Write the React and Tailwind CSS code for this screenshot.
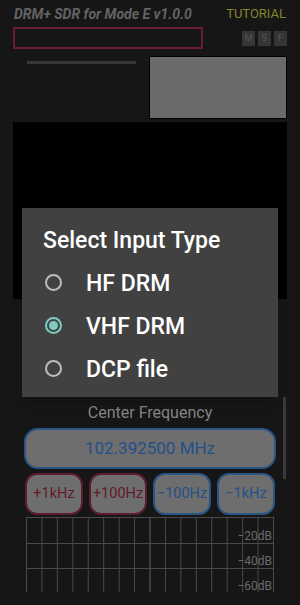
import { useState } from "react";

const inputTypes = [
  { id: "hf", label: "HF DRM" },
  { id: "vhf", label: "VHF DRM" },
  { id: "dcp", label: "DCP file" },
];

const stepButtons = [
  { label: "+1kHz", tone: "red" },
  { label: "+100Hz", tone: "red" },
  { label: "\u2212100Hz", tone: "blue" },
  { label: "\u22121kHz", tone: "blue" },
];

const SpectrumGrid = () => {
  const width = 248;
  const height = 75;
  const cols = 16;
  const step = (width - 1) / cols;

  return (
    <svg width={width} height={height} className="block">
      {Array.from({ length: cols + 1 }).map((_, i) => (
        <line
          key={i}
          x1={0.5 + i * step}
          x2={0.5 + i * step}
          y1={0}
          y2={height}
          stroke="#4a4a4a"
          strokeWidth={i === 8 ? 1.5 : 1}
        />
      ))}
      {[0.5, 26.5, 51.5].map((y) => (
        <line key={y} x1={0} x2={width} y1={y} y2={y} stroke="#4a4a4a" strokeWidth={1} />
      ))}
      {["20", "40", "60"].map((db, i) => (
        <text
          key={db}
          x={246}
          y={23 + i * 25}
          textAnchor="end"
          fontSize="12"
          fontFamily="Roboto, sans-serif"
          fill="#6a6a6a"
        >
          {`\u2212${db}dB`}
        </text>
      ))}
    </svg>
  );
};

const App = () => {
  const [inputType, setInputType] = useState("vhf");

  return (
    <div className="relative h-[605px] w-[300px] overflow-hidden bg-[#161616] font-['Roboto',sans-serif]">
      <header className="flex items-start justify-between px-[14px] pt-[6px]">
        <h1 className="text-[14px] font-bold italic leading-[16px] text-[#636363]">
          DRM+ SDR for Mode E v1.0.0
        </h1>
        <span className="text-[13px] leading-[16px] text-[#85852a]">TUTORIAL</span>
      </header>

      <div className="mt-[5px] flex items-start justify-between px-[13px]">
        <div className="h-[22px] w-[190px] border-2 border-[#6a1b39]" />
        <div className="mt-[4px] flex gap-[3px]">
          {["M", "S", "F"].map((k) => (
            <div
              key={k}
              className="flex h-[15px] w-[13px] items-center justify-center bg-[#353535] text-[9px] text-[#555]"
            >
              {k}
            </div>
          ))}
        </div>
      </div>

      <div className="mt-[7px] flex px-[13px]">
        <div className="flex-1 pl-[14px] pt-[5px]">
          <div className="h-[3px] w-[109px] bg-[#383838]" />
        </div>
        <div className="h-[63px] w-[138px] border border-black bg-[#6b6b6b]" />
      </div>

      <div className="mx-[13px] mt-[3px] h-[177px] bg-black" />

      <p className="mt-[105px] text-center text-[16px] leading-[18px] text-[#858585]">
        Center Frequency
      </p>

      <div className="mx-[24px] mt-[6px] flex h-[41px] items-center justify-center rounded-[14px] border-2 border-[#2b5586] bg-[#6e6e6e] text-[17px] text-[#24508a]">
        102.392500 MHz
      </div>

      <div className="mx-[25px] mt-[4px] flex gap-[6px]">
        {stepButtons.map((b) => (
          <button
            key={b.label}
            type="button"
            className={`flex h-[42px] flex-1 items-center justify-center rounded-[12px] border-2 bg-[#6e6e6e] text-[14.5px] ${
              b.tone === "red"
                ? "border-[#5e1d2c] text-[#65192a]"
                : "border-[#2b5586] text-[#24508a]"
            }`}
          >
            {b.label}
          </button>
        ))}
      </div>

      <div className="ml-[26px] mt-[2px]">
        <SpectrumGrid />
      </div>

      {/* scrollbar */}
      <div className="absolute left-[283px] top-[397px] h-[82px] w-[3px] bg-[#3a3a3a]" />

      {/* dialog */}
      <div className="absolute left-[22px] top-[208px] h-[189px] w-[256px] bg-[#414141] pt-[19px] shadow-lg">
        <h2 className="pl-[21px] text-[23px] font-medium leading-[28px] text-white">
          Select Input Type
        </h2>
        <div className="mt-[6px]">
          {inputTypes.map((t) => {
            const active = inputType === t.id;
            return (
              <button
                key={t.id}
                type="button"
                onClick={() => setInputType(t.id)}
                className="flex h-[43px] w-full items-center pl-[23px] text-left"
              >
                <span
                  className={`flex h-[17px] w-[17px] items-center justify-center rounded-full border-2 ${
                    active ? "border-[#7fcac3]" : "border-[#bdbdbd]"
                  }`}
                >
                  {active && <span className="h-[9px] w-[9px] rounded-full bg-[#7fcac3]" />}
                </span>
                <span className="ml-[24px] pt-[3px] text-[23px] font-medium text-white">
                  {t.label}
                </span>
              </button>
            );
          })}
        </div>
      </div>
    </div>
  );
};

export default App;
